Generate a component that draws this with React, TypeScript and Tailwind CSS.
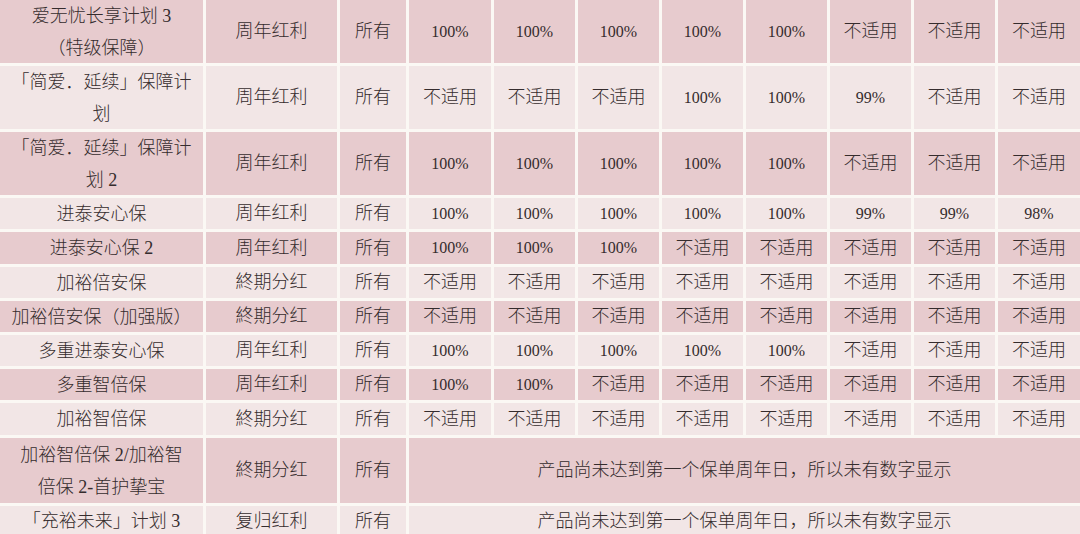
import React from "react";

// ------------------------------------------------------------
// Table data
// ------------------------------------------------------------

type Row = {
  name: React.ReactNode;
  type: string;
  scope: string;
  values?: string[];
  note?: string;
  h: string;
};

const NA = "不适用";
const NOTE = "产品尚未达到第一个保单周年日，所以未有数字显示";

const ROWS: Row[] = [
  {
    name: (
      <>
        爱无忧长享计划 3<br />（特级保障）
      </>
    ),
    type: "周年红利",
    scope: "所有",
    values: ["100%", "100%", "100%", "100%", "100%", NA, NA, NA],
    h: "h-[63px]",
  },
  {
    name: (
      <>
        「简爱．延续」保障计<br />划
      </>
    ),
    type: "周年红利",
    scope: "所有",
    values: [NA, NA, NA, "100%", "100%", "99%", NA, NA],
    h: "h-[63px]",
  },
  {
    name: (
      <>
        「简爱．延续」保障计<br />划 2
      </>
    ),
    type: "周年红利",
    scope: "所有",
    values: ["100%", "100%", "100%", "100%", "100%", NA, NA, NA],
    h: "h-[63px]",
  },
  {
    name: "进泰安心保",
    type: "周年红利",
    scope: "所有",
    values: ["100%", "100%", "100%", "100%", "100%", "99%", "99%", "98%"],
    h: "h-[31px]",
  },
  {
    name: "进泰安心保 2",
    type: "周年红利",
    scope: "所有",
    values: ["100%", "100%", "100%", NA, NA, NA, NA, NA],
    h: "h-[32px]",
  },
  {
    name: "加裕倍安保",
    type: "終期分红",
    scope: "所有",
    values: [NA, NA, NA, NA, NA, NA, NA, NA],
    h: "h-[31px]",
  },
  {
    name: "加裕倍安保（加强版）",
    type: "終期分红",
    scope: "所有",
    values: [NA, NA, NA, NA, NA, NA, NA, NA],
    h: "h-[31px]",
  },
  {
    name: "多重进泰安心保",
    type: "周年红利",
    scope: "所有",
    values: ["100%", "100%", "100%", "100%", "100%", NA, NA, NA],
    h: "h-[31px]",
  },
  {
    name: "多重智倍保",
    type: "周年红利",
    scope: "所有",
    values: ["100%", "100%", NA, NA, NA, NA, NA, NA],
    h: "h-[31px]",
  },
  {
    name: "加裕智倍保",
    type: "終期分红",
    scope: "所有",
    values: [NA, NA, NA, NA, NA, NA, NA, NA],
    h: "h-[32px]",
  },
  {
    name: (
      <>
        加裕智倍保 2/加裕智<br />倍保 2-首护挚宝
      </>
    ),
    type: "終期分红",
    scope: "所有",
    note: NOTE,
    h: "h-[65px]",
  },
  {
    name: "「充裕未来」计划 3",
    type: "复归红利",
    scope: "所有",
    note: NOTE,
    h: "h-[30px]",
  },
];

// ------------------------------------------------------------
// Component
// ------------------------------------------------------------

export default function App() {
  return (
    <div
      className="w-[1080px] h-[534px] overflow-hidden bg-[#fbf8f4] text-[#352c2d] font-light"
      style={{ fontFamily: '"Liberation Serif", "Noto Sans CJK SC", serif' }}
    >
      <div className="grid grid-cols-[203px_131px_66px_82px_repeat(6,81px)_82px] gap-[3px]">
        {ROWS.map((row, i) => {
          const bg = i % 2 === 0 ? "bg-[#e7cbce]" : "bg-[#f2e6e6]";
          const cell = `${bg} ${row.h} flex items-center justify-center text-center`;
          return (
            <React.Fragment key={i}>
              <div className={`${cell} text-[18px] leading-[32px]`}>
                <span>{row.name}</span>
              </div>
              <div className={`${cell} text-[18px]`}>{row.type}</div>
              <div className={`${cell} text-[18px]`}>{row.scope}</div>
              {row.note ? (
                <div className={`${cell} col-span-8 text-[18px]`}>
                  {row.note}
                </div>
              ) : (
                row.values!.map((v, j) => (
                  <div
                    key={j}
                    className={`${cell} ${v === NA ? "text-[18px]" : "text-[16px]"}`}
                  >
                    {v}
                  </div>
                ))
              )}
            </React.Fragment>
          );
        })}
      </div>
    </div>
  );
}
